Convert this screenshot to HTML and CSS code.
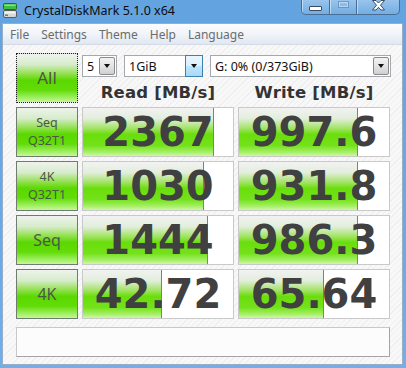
FILE: index.html
```html
<!DOCTYPE html>
<html lang="en">
<head>
  <meta charset="UTF-8" />
  <title>CrystalDiskMark 5.1.0 x64</title>
  <link rel="stylesheet" href="styles.css">
</head>
<body>
  <div class="window">
    <div class="titlebar">
      <svg class="app-icon" width="16" height="16" viewBox="0 0 16 16">
        <rect x="0.5" y="0.5" width="13" height="6" rx="1" fill="#3fbf3f" stroke="#1f6f2a"/>
        <rect x="1.5" y="1.5" width="11" height="1.5" fill="#8fe08f"/>
        <rect x="0.5" y="7.5" width="13" height="7" rx="1.5" fill="#d8d8d8" stroke="#5a5a5a"/>
        <rect x="1.5" y="8.5" width="11" height="2" fill="#f4f4f4"/>
        <rect x="2" y="11.5" width="3" height="1.5" fill="#2faa2f"/>
      </svg>
      <span class="title">CrystalDiskMark 5.1.0 x64</span>
      <div class="caption">
        <div class="cap-btn min"><span class="min-glyph"></span></div>
        <div class="cap-btn max"><span class="max-glyph"></span></div>
        <div class="cap-btn close">
          <svg width="15" height="11" viewBox="0 0 15 11">
            <path d="M1.5 0.5 L5 0.5 L7.5 3 L10 0.5 L13.5 0.5 L9.5 5.2 L13.5 10 L10 10 L7.5 7.3 L5 10 L1.5 10 L5.5 5.2 Z" fill="#fff" stroke="#3b4d63" stroke-width="1"/>
          </svg>
        </div>
      </div>
    </div>

    <div class="client">
      <div class="menubar">
        <span>File</span>
        <span>Settings</span>
        <span>Theme</span>
        <span>Help</span>
        <span>Language</span>
      </div>

      <div class="content">
        <div class="grid">
          <div class="label big all">All</div>

          <div class="combos">
            <div class="combo count"><span>5</span><i class="drop"></i></div>
            <div class="combo size"><span>1GiB</span><i class="drop hot"></i></div>
            <div class="combo drive"><span>G: 0% (0/373GiB)</span><i class="drop"></i></div>
          </div>

          <div class="head">Read [MB/s]</div>
          <div class="head">Write [MB/s]</div>

          <div class="label">Seq<br>Q32T1</div>
          <div class="cell"><div class="bar" style="width: 86.7%"></div><span class="value">2367</span></div>
          <div class="cell"><div class="bar" style="width: 78.7%"></div><span class="value">997.6</span></div>

          <div class="label">4K<br>Q32T1</div>
          <div class="cell"><div class="bar" style="width: 80%"></div><span class="value">1030</span></div>
          <div class="cell"><div class="bar" style="width: 78.7%"></div><span class="value">931.8</span></div>

          <div class="label big">Seq</div>
          <div class="cell"><div class="bar" style="width: 82.7%"></div><span class="value">1444</span></div>
          <div class="cell"><div class="bar" style="width: 78.7%"></div><span class="value">986.3</span></div>

          <div class="label big">4K</div>
          <div class="cell"><div class="bar" style="width: 52%"></div><span class="value">42.72</span></div>
          <div class="cell"><div class="bar" style="width: 56%"></div><span class="value">65.64</span></div>
        </div>

        <div class="comment"></div>
      </div>
    </div>
  </div>
</body>
</html>
```

FILE: styles.css
```css
body {
  margin: 0;
  font-family: 'Noto Sans', sans-serif;
  background: linear-gradient(to bottom, #63a4e0 0%, #6aaae4 60%, #70b0ea 100%);
  overflow: hidden;
}

.window {
  display: flex;
  flex-direction: column;
  width: 406px;
  height: 368px;
}

/* title bar */
.titlebar {
  display: flex;
  align-items: flex-start;
  height: 23px;
}

.app-icon {
  margin: 3px 0 0 3px;
}

.title {
  margin: 2px 0 0 5px;
  font-size: 12.5px;
  line-height: 18px;
  color: #0c0c0c;
}

.caption {
  display: flex;
  margin-left: auto;
  margin-right: 6px;
  height: 14px;
  border: 1px solid #4a6d94;
  border-top: none;
  border-radius: 0 0 5px 5px;
  background: linear-gradient(to bottom, rgba(255, 255, 255, 0.35), rgba(255, 255, 255, 0.1));
  overflow: hidden;
}

.cap-btn {
  display: flex;
  justify-content: center;
  align-items: flex-start;
  border-right: 1px solid #4a6d94;
  box-shadow: inset 1px 0 0 rgba(255, 255, 255, 0.45);
}

.cap-btn.min { width: 27px; }
.cap-btn.max { width: 26px; }
.cap-btn.close { width: 42px; border-right: none; }

.min-glyph {
  display: block;
  width: 11px;
  height: 3px;
  margin-top: 6px;
  background: #fff;
  border: 1px solid #3b4d63;
  border-radius: 1px;
}

.max-glyph {
  display: block;
  width: 9px;
  height: 5px;
  margin-top: 1px;
  border: 1px solid rgba(80, 120, 170, 0.55);
  box-shadow: inset 0 0 0 1px rgba(255, 255, 255, 0.4);
}

/* client area */
.client {
  flex: 1;
  display: flex;
  flex-direction: column;
  margin: 0 3px 3px 2px;
  border: 1px solid #98aec8;
  background-color: #f6f6f6;
  background-image: repeating-linear-gradient(-45deg, #f8f8f8 0 3px, #efefef 3px 4px);
}

.menubar {
  display: flex;
  height: 20px;
  align-items: center;
  padding-left: 7px;
  background: linear-gradient(to bottom, #fbfcfd 0%, #f1f4f9 50%, #e1e7f1 100%);
  border-bottom: 1px solid #d4dbe6;
  font-size: 12px;
  color: #6c6c6c;
}

.menubar span {
  margin-right: 12px;
}

.content {
  padding: 8px 0 7px 13px;
}

.grid {
  display: grid;
  grid-template-columns: 62px 152px 152px;
  grid-template-rows: 24px 22px 50px 50px 50px 50px;
  column-gap: 4px;
  row-gap: 4px;
}

/* green test buttons */
.label {
  display: flex;
  align-items: center;
  justify-content: center;
  text-align: center;
  box-sizing: border-box;
  border: 1px solid #6f7c6f;
  background: linear-gradient(to bottom, #eef3ec 0%, #d6eccb 22%, #8fe04a 42%, #5ad800 55%, #62dc08 75%, #9cee5c 90%, #c6f79a 100%);
  font-size: 12.5px;
  line-height: 18px;
  color: #4b5846;
}

.label.big {
  font-size: 16px;
}

.label.all {
  grid-row: 1 / 3;
  border: 1px dotted #202020;
  font-size: 17px;
}

/* combo boxes */
.combos {
  grid-column: 2 / 4;
  align-self: end;
  display: flex;
  gap: 7px;
  margin-right: -1px;
}

.combo {
  display: flex;
  align-items: center;
  box-sizing: border-box;
  height: 22px;
  padding: 1px;
  background: #fff;
  border: 1px solid #a5a8ad;
  font-size: 12.5px;
  color: #111;
}

.combo span {
  flex: 1;
  padding-left: 3px;
}

.combo.count { width: 35px; }
.combo.size { width: 79px; padding-right: 0; }
.combo.drive { flex: 1; }

.drop {
  display: flex;
  align-items: center;
  justify-content: center;
  box-sizing: border-box;
  width: 16px;
  height: 100%;
  border: 1px solid #8a8a8a;
  border-radius: 2px;
  background: linear-gradient(to bottom, #f2f2f2 0%, #e4e4e4 50%, #cfcfcf 100%);
}

.drop::after {
  content: "";
  border-left: 3.5px solid transparent;
  border-right: 3.5px solid transparent;
  border-top: 4px solid #111;
}

.drop.hot {
  width: 18px;
  height: 22px;
  margin: -2px -1px -2px 0;
  border-color: #3c7fb1;
  border-radius: 0;
  background: linear-gradient(to bottom, #eaf6fd 0%, #d9f0fc 50%, #bee6fd 51%, #a7d9f5 100%);
}

/* column headers */
.head {
  display: flex;
  align-items: center;
  justify-content: center;
  font-family: 'DejaVu Sans', sans-serif;
  font-weight: bold;
  font-size: 16.5px;
  color: #333;
  letter-spacing: 0.2px;
}

/* result cells */
.cell {
  position: relative;
  display: flex;
  align-items: center;
  justify-content: center;
  box-sizing: border-box;
  padding: 1px;
  border: 1px solid #c9c9c9;
  background: #fff;
}

.bar {
  position: absolute;
  left: 0;
  top: 0;
  bottom: 0;
  border-right: 1px solid #4fae10;
  background: linear-gradient(to bottom, #f2f2f2 0%, #e2eedc 22%, #a4e466 42%, #6ade0c 55%, #74e21a 78%, #a6ef66 92%, #cdf8a6 100%);
}

.value {
  position: relative;
  font-family: 'DejaVu Sans', sans-serif;
  font-weight: bold;
  font-size: 40px;
  line-height: 1;
  color: #404040;
}

.comment {
  margin: 8px 12px 0 0;
  height: 30px;
  box-sizing: border-box;
  background: #fcfcfc;
  border: 1px solid;
  border-color: #c8c8c8 #a4a4a4 #a4a4a4 #c8c8c8;
}
```
